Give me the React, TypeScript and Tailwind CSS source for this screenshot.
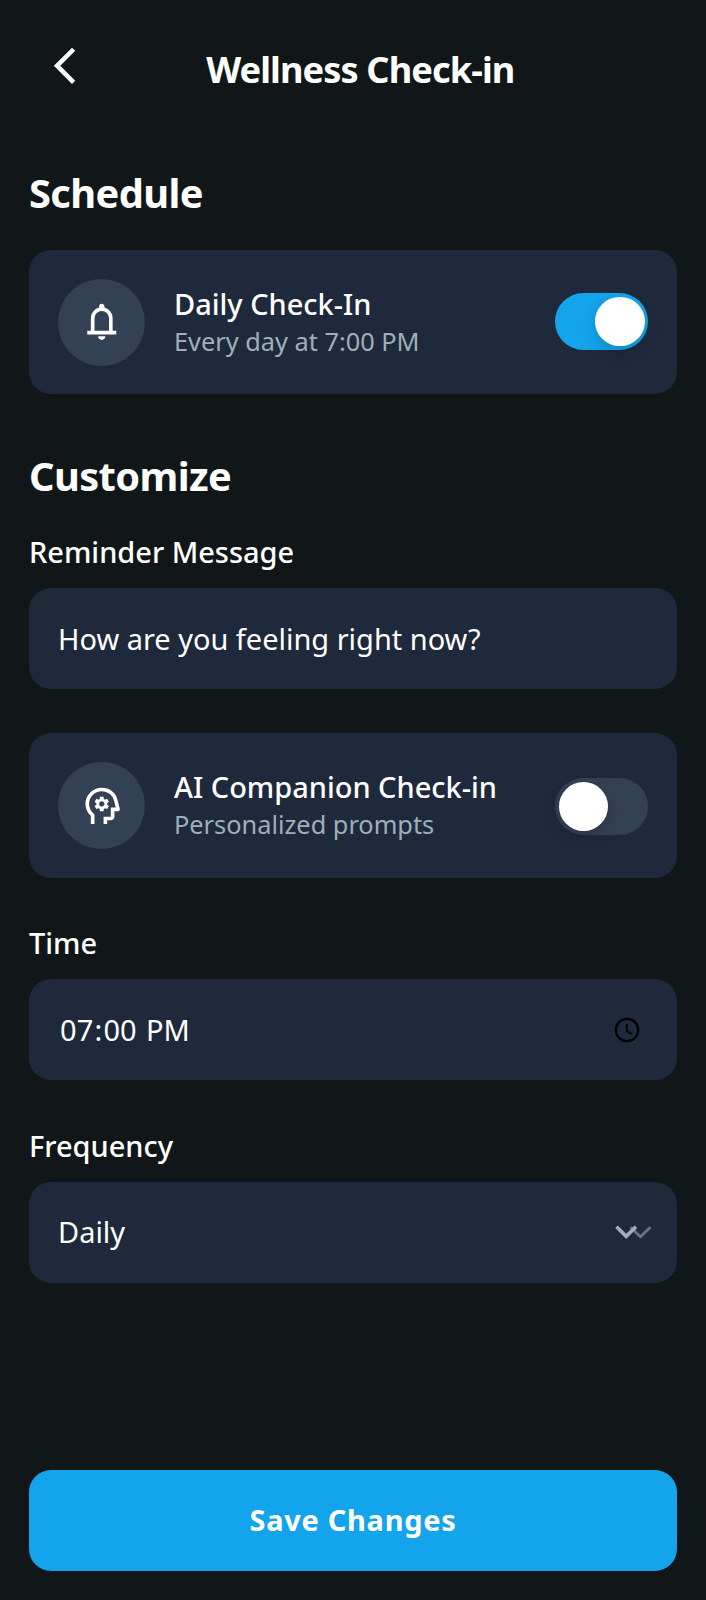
import type { ReactNode } from "react";

function Symbol({ d, className = "" }: { d: string; className?: string }) {
  return (
    <svg viewBox="0 -960 960 960" className={`h-[43.5px] w-[43.5px] shrink-0 ${className}`} fill="currentColor" aria-hidden="true">
      <path d={d} />
    </svg>
  );
}

const BACK = "M640-80 240-480l400-400 71 71-329 329 329 329-71 71Z";
const BELL =
  "M160-200v-80h80v-280q0-83 50-147.5T420-792v-28q0-25 17.5-42.5T480-880q25 0 42.5 17.5T540-820v28q80 20 130 84.5T720-560v280h80v80H160Zm320-300Zm0 420q-33 0-56.5-23.5T400-160h160q0 33-23.5 56.5T480-80ZM320-280h320v-280q0-66-47-113t-113-47q-66 0-113 47t-47 113v280Z";
const PSYCHOLOGY =
  "M240-80v-172q-57-52-88.5-121.5T120-520q0-150 105-255t255-105q125 0 221.5 73.5T827-615l52 205q5 19-7 34.5T840-360h-80v120q0 33-23.5 56.5T680-160h-80v80h-80v-160h160v-200h108l-38-155q-23-91-98-148t-172-57q-116 0-198 81t-82 197q0 60 24.5 114t69.5 96l26 24v208h-80Zm254-360Zm-54 80h80l6-50q8-3 14.5-7t11.5-9l46 20 40-68-40-30q2-8 2-16t-2-16l40-30-40-68-46 20q-5-5-11.5-9t-14.5-7l-6-50h-80l-6 50q-8 3-14.5 7t-11.5 9l-46-20-40 68 40 30q-2 8-2 16t2 16l-40 30 40 68 46-20q5 5 11.5 9t14.5 7l6 50Zm40-100q-25 0-42.5-17.5T420-520q0-25 17.5-42.5T480-580q25 0 42.5 17.5T540-520q0 25-17.5 42.5T480-460Z";

function Toggle({ on, label }: { on: boolean; label: string }) {
  return (
    <button
      role="switch"
      aria-checked={on}
      aria-label={label}
      className={`flex h-[56.4px] w-[92.8px] shrink-0 items-center rounded-full px-[3.4px] ${on ? "mb-[1.6px] justify-end bg-[#13a4ec]" : "mt-[1.6px] justify-start bg-[#334155]"}`}
    >
      <span className="h-[49.4px] w-[49.4px] rounded-full bg-white shadow-[0_5.4px_14.5px_rgba(0,0,0,0.15),0_5.4px_2px_rgba(0,0,0,0.02)]" />
    </button>
  );
}

function SettingCard({ icon, title, detail, on }: { icon: string; title: string; detail: string; on: boolean }) {
  return (
    <div className="flex h-[144.6px] items-center rounded-[22px] bg-[#1e293b] px-[29px]">
      <div className="flex h-[87px] w-[87px] shrink-0 items-center justify-center rounded-full bg-[#334155] pr-[0.4px]">
        <Symbol d={icon} />
      </div>
      <div className="ml-[29px] flex-1">
        <p className="text-[28.96px] leading-[37px] font-medium">{title}</p>
        <p className="text-[25.34px] leading-[38px] text-[#9db0b9]">{detail}</p>
      </div>
      <Toggle on={on} label={title} />
    </div>
  );
}

function Field({ label, value, children }: { label: string; value: ReactNode; children?: ReactNode }) {
  return (
    <div>
      <p className="mb-[14.5px] text-[28.96px] leading-[43.5px] font-medium">{label}</p>
      <div className="flex h-[101.4px] items-center justify-between rounded-[22px] bg-[#1e293b] pl-[29px] text-[28.96px] leading-[43.5px]">
        {value}
        {children}
      </div>
    </div>
  );
}

export default function App() {
  return (
    <div className="flex h-[1600px] w-full flex-col bg-[#111718] px-[29px] pb-[29px] font-['Noto_Sans',sans-serif] text-white">
      <header className="flex h-[138px] shrink-0 items-center">
        <button aria-label="Back" className="mb-[7.5px] ml-[14.1px]">
          <Symbol d={BACK} />
        </button>
        <h1 className="flex-1 pt-[1.6px] pr-[43px] text-center text-[36.2px] leading-[45px] font-bold tracking-[-0.905px]">Wellness Check-in</h1>
      </header>

      <main className="flex-1">
        <h2 className="mt-[29.5px] mb-[32.4px] text-[39.8px] leading-[50px] font-bold tracking-[-0.6px]">Schedule</h2>
        <SettingCard icon={BELL} title="Daily Check-In" detail="Every day at 7:00 PM" on />

        <h2 className="mt-[56.6px] mb-[28.8px] text-[39.8px] leading-[50px] font-bold tracking-[-0.6px]">Customize</h2>
        <Field label="Reminder Message" value="How are you feeling right now?" />
        <div className="mt-[44px] mb-[43.2px]">
          <SettingCard icon={PSYCHOLOGY} title="AI Companion Check-in" detail="Personalized prompts" on={false} />
        </div>
        <Field
          label="Time"
          value={
            <div className="mb-[0.8px] ml-[1.2px] flex whitespace-pre">
              <span className="px-[0.9px]">07</span>
              <span className="px-[0.4px]">:</span>
              <span className="px-[0.9px]">00</span>
              <span> </span>
              <span className="px-[0.9px]">PM</span>
            </div>
          }
        >
          <svg viewBox="0 0 26 26" className="mr-[37.4px] h-[26px] w-[26px]" fill="none" stroke="#000" strokeWidth="2.2" aria-hidden="true">
            <circle cx="13" cy="13" r="11.2" />
            <path d="M12.8 6.8v7.2l5.4 3.3" strokeWidth="1.8" />
          </svg>
        </Field>
        <div className="mt-[43.5px]">
          <Field label="Frequency" value={<span className="mb-[1px]">Daily</span>}>
            <svg viewBox="0 0 38 14" className="mr-[25.6px] mb-[2px] h-[14px] w-[38px]" fill="none" aria-hidden="true">
              <path d="m18.5 3 9 8.8L36.5 3" stroke="#6b7280" strokeWidth="3" strokeLinecap="round" strokeLinejoin="round" />
              <path d="m3.5 1.8 9.7 9.6 9.7-9.6" stroke="#9db0b9" strokeWidth="3.6" />
            </svg>
          </Field>
        </div>
      </main>

      <button className="h-[101.5px] shrink-0 rounded-[22px] bg-[#13a4ec] pb-[1.4px] text-[28.96px] leading-[43.5px] font-bold tracking-[0.725px]">Save Changes</button>
    </div>
  );
}
